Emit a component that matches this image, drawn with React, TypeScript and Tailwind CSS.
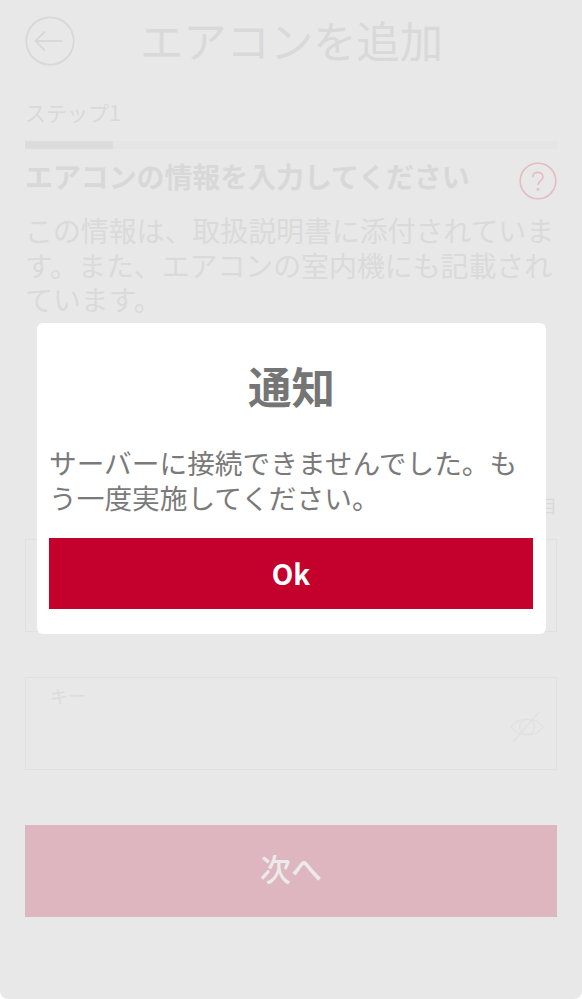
const font = "font-['Noto_Sans_CJK_JP','Noto_Sans',sans-serif]";

function BackIcon() {
  return (
    <svg width="50" height="50" viewBox="0 0 50 50" fill="none" className="stroke-[#d8d8d8] shrink-0">
      <circle cx="25" cy="25" r="23.7" strokeWidth="1.8" />
      <path d="M10.5 25H37M20 15.5L10.5 25L20 34.5" strokeWidth="1.8" />
    </svg>
  );
}

function HelpIcon() {
  return (
    <svg width="38" height="38" viewBox="0 0 38 38" fill="none" className="shrink-0">
      <circle cx="19" cy="19" r="17.8" stroke="#e3bcc4" strokeWidth="1.6" />
      <path d="M13.6 15.2C13.6 12.2 16 10.4 18.8 10.4C21.8 10.4 24 12.2 24 14.9C24 18.4 19.1 18.8 19.1 23" stroke="#e3bcc4" strokeWidth="1.6" />
      <circle cx="19" cy="27.4" r="1.3" fill="#e3bcc4" />
    </svg>
  );
}

function EyeOffIcon() {
  return (
    <svg width="34" height="32" viewBox="0 0 34 32" fill="none" stroke="#e0e0e0" strokeWidth="1.2">
      <path d="M1 16C5 10.5 10.5 8 17 8C23.5 8 29 10.5 33 16C29 21.5 23.5 24 17 24C10.5 24 5 21.5 1 16Z" />
      <circle cx="17" cy="16" r="7.5" />
      <path d="M29 1L3 31" />
    </svg>
  );
}

function Field({ label, icon }: { label?: string; icon?: boolean }) {
  return (
    <div className="relative h-[93px] border-[1.5px] border-[#e0e0e0] px-[24px] pt-[4px]">
      {label && <span className="block text-[18px] leading-[26px] text-[#dcdcdc]">{label}</span>}
      {icon && (
        <span className="absolute right-[12px] top-[33px]">
          <EyeOffIcon />
        </span>
      )}
    </div>
  );
}

export default function App() {
  return (
    <div className={`relative h-[999px] w-[582px] overflow-hidden bg-white ${font}`}>
      <div className="flex h-full flex-col rounded-b-[8px] bg-[#e8e8e8] px-[25px] pt-[16px]">
        <div className="flex h-[50px] items-center">
          <BackIcon />
          <h1 className="ml-[65px] pb-[4px] text-[43.3px] leading-[50px] font-normal text-[#d9d9d9]">エアコンを追加</h1>
        </div>

        <p className="mt-[31px] text-[21px] leading-[30px] text-[#d9d9d9]">ステップ1</p>
        <div className="mt-[14px] h-[8px] bg-[#e5e5e5]">
          <div className="h-full w-[88px] bg-[#dcdcdc]" />
        </div>

        <div className="mt-[6px] flex items-start justify-between">
          <h2 className="text-[27.9px] leading-[42px] font-bold text-[#d8d8d8]">エアコンの情報を入力してください</h2>
          <span className="mt-[7px]">
            <HelpIcon />
          </span>
        </div>

        <p className="mt-[13px] text-[27.9px] leading-[34.5px] text-[#dadada]">
          この情報は、取扱説明書に添付されています。また、エアコンの室内機にも記載されています。
        </p>

        <p className="mt-[177px] h-[22px] text-right text-[18px] leading-[22px] text-[#d9d9d9]">必須項目</p>

        <div className="mt-[23px]">
          <Field />
        </div>
        <div className="mt-[45px]">
          <Field label="キー" icon />
        </div>

        <button className="mt-[55px] h-[92px] w-full bg-[#deb6bf] pb-[5px] text-[31px] font-medium text-[#ebebeb]">次へ</button>
      </div>

      <div className="absolute left-[37px] top-[323px] h-[311px] w-[509px] rounded-[6px] bg-white px-[12px]">
        <h3 className="pt-[37px] text-center text-[43.5px] leading-[52px] font-bold text-[#757575]">通知</h3>
        <p className="mt-[33px] text-[27.7px] leading-[34.5px] text-[#7a7a7a]">
          サーバーに接続できませんでした。もう一度実施してください。
        </p>
        <button className="mt-[24px] h-[71px] w-[484px] bg-[#c4002d] pb-[2px] text-[28px] font-bold text-white">Ok</button>
      </div>
    </div>
  );
}
